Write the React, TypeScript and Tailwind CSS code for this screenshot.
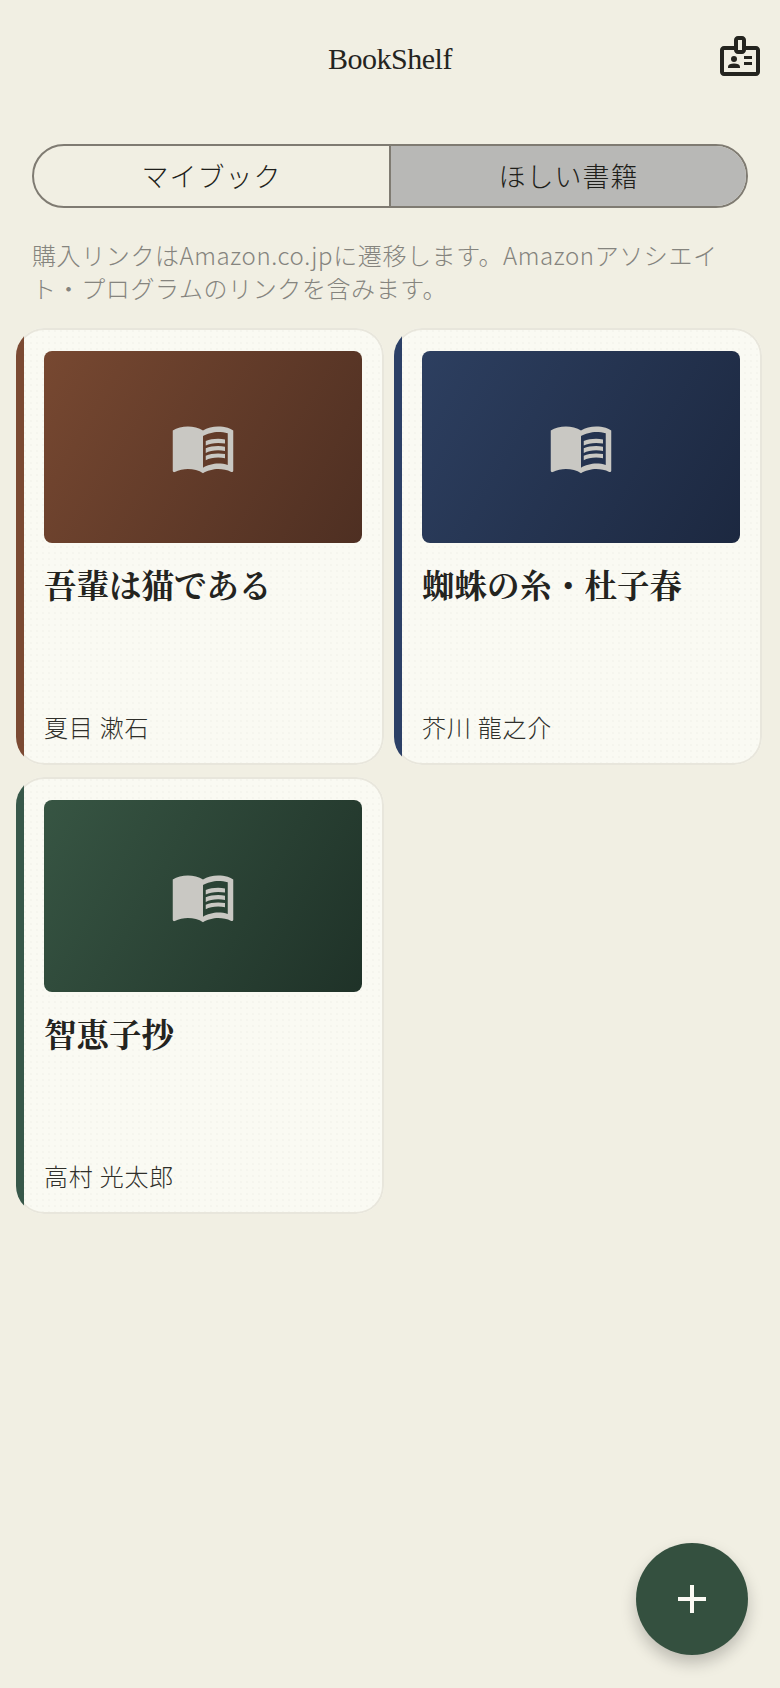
import React from "react";
import { MdAdd, MdMenuBook, MdOutlineBadge } from "react-icons/md";

const sans = "font-['Noto_Sans_CJK_JP','Noto_Sans',sans-serif]";

const books = [
  {
    title: "吾輩は猫である",
    author: "夏目 漱石",
    bar: "bg-[#7b4a33]",
    cover: "bg-[linear-gradient(120deg,#774831,#4e2f22)]",
  },
  {
    title: "蜘蛛の糸・杜子春",
    author: "芥川 龍之介",
    bar: "bg-[#2c4066]",
    cover: "bg-[linear-gradient(120deg,#2d3f60,#1c2840)]",
  },
  {
    title: "智恵子抄",
    author: "高村 光太郎",
    bar: "bg-[#38584a]",
    cover: "bg-[linear-gradient(120deg,#375543,#1f3228)]",
  },
];

const BookCard = ({ book }: { book: (typeof books)[number] }) => {
  return (
    <div className="h-[437px] rounded-[28px] overflow-hidden flex bg-[#fafaf3] bg-[radial-gradient(circle,rgba(60,60,40,0.025)_1px,transparent_1px)] bg-[length:6px_6px] shadow-[inset_0_0_0_2px_#e8e6dc]">
      <div className={`w-[8px] shrink-0 ${book.bar}`} />
      <div className="flex-1 min-w-0 pl-[20px] pr-[22px] pt-[23px] pb-[20px] flex flex-col">
        <div className={`h-[192px] rounded-lg ${book.cover} flex items-center justify-center`}>
          <MdMenuBook size={66} className="text-[#c9c8c3]" />
        </div>
        <h3 className="mt-[22px] text-[32.5px] leading-[44px] font-bold text-[#24241f] font-['Liberation_Serif','Noto_Serif_CJK_JP','Noto_Sans_CJK_JP',serif]">
          {book.title}
        </h3>
        <p className="mt-auto text-[24px] leading-[36px] font-light tracking-[0.8px] text-[#2f2f2a]">
          {book.author}
        </p>
      </div>
    </div>
  );
};

export default function App() {
  return (
    <div className={`min-h-[1688px] bg-[#f1efe3] ${sans}`}>
      <header className="h-[116px] flex items-center justify-between pl-[16px] pr-[16px]">
        <div className="w-[48px]" />
        <h1 className="text-[30px] tracking-[-0.5px] text-[#24241f] font-['Liberation_Serif',serif]">BookShelf</h1>
        <MdOutlineBadge size={48} className="mb-[4px] text-[#24241f]" />
      </header>

      <div className="mx-[32px] mt-[28px] h-[64px] rounded-full border-2 border-[#7f7b72] flex overflow-hidden">
        <button className="flex-1 text-[27px] font-light text-[#1f1f1b] tracking-[1px] border-r-2 border-[#7f7b72]">
          マイブック
        </button>
        <button className="flex-1 bg-[#b8b8b6] text-[27px] font-light text-[#1f1f1b] tracking-[1px]">
          ほしい書籍
        </button>
      </div>

      <p className="mx-[32px] mt-[30px] text-[24px] leading-[33px] font-light tracking-[0.6px] text-[#85847e]">
        購入リンクはAmazon.co.jpに遷移します。Amazonアソシエイト・プログラムのリンクを含みます。
      </p>

      <div className="mt-[24px] pl-4 pr-[18px] grid grid-cols-2 gap-x-[10px] gap-y-[12px]">
        {books.map((book) => (
          <BookCard key={book.title} book={book} />
        ))}
      </div>

      <button className="fixed left-[636px] top-[1543px] w-[112px] h-[112px] rounded-full bg-[#34503f] text-[#fbfaf4] flex items-center justify-center shadow-[0_8px_16px_rgba(0,0,0,0.22)]">
        <MdAdd size={48} />
      </button>
    </div>
  );
}
